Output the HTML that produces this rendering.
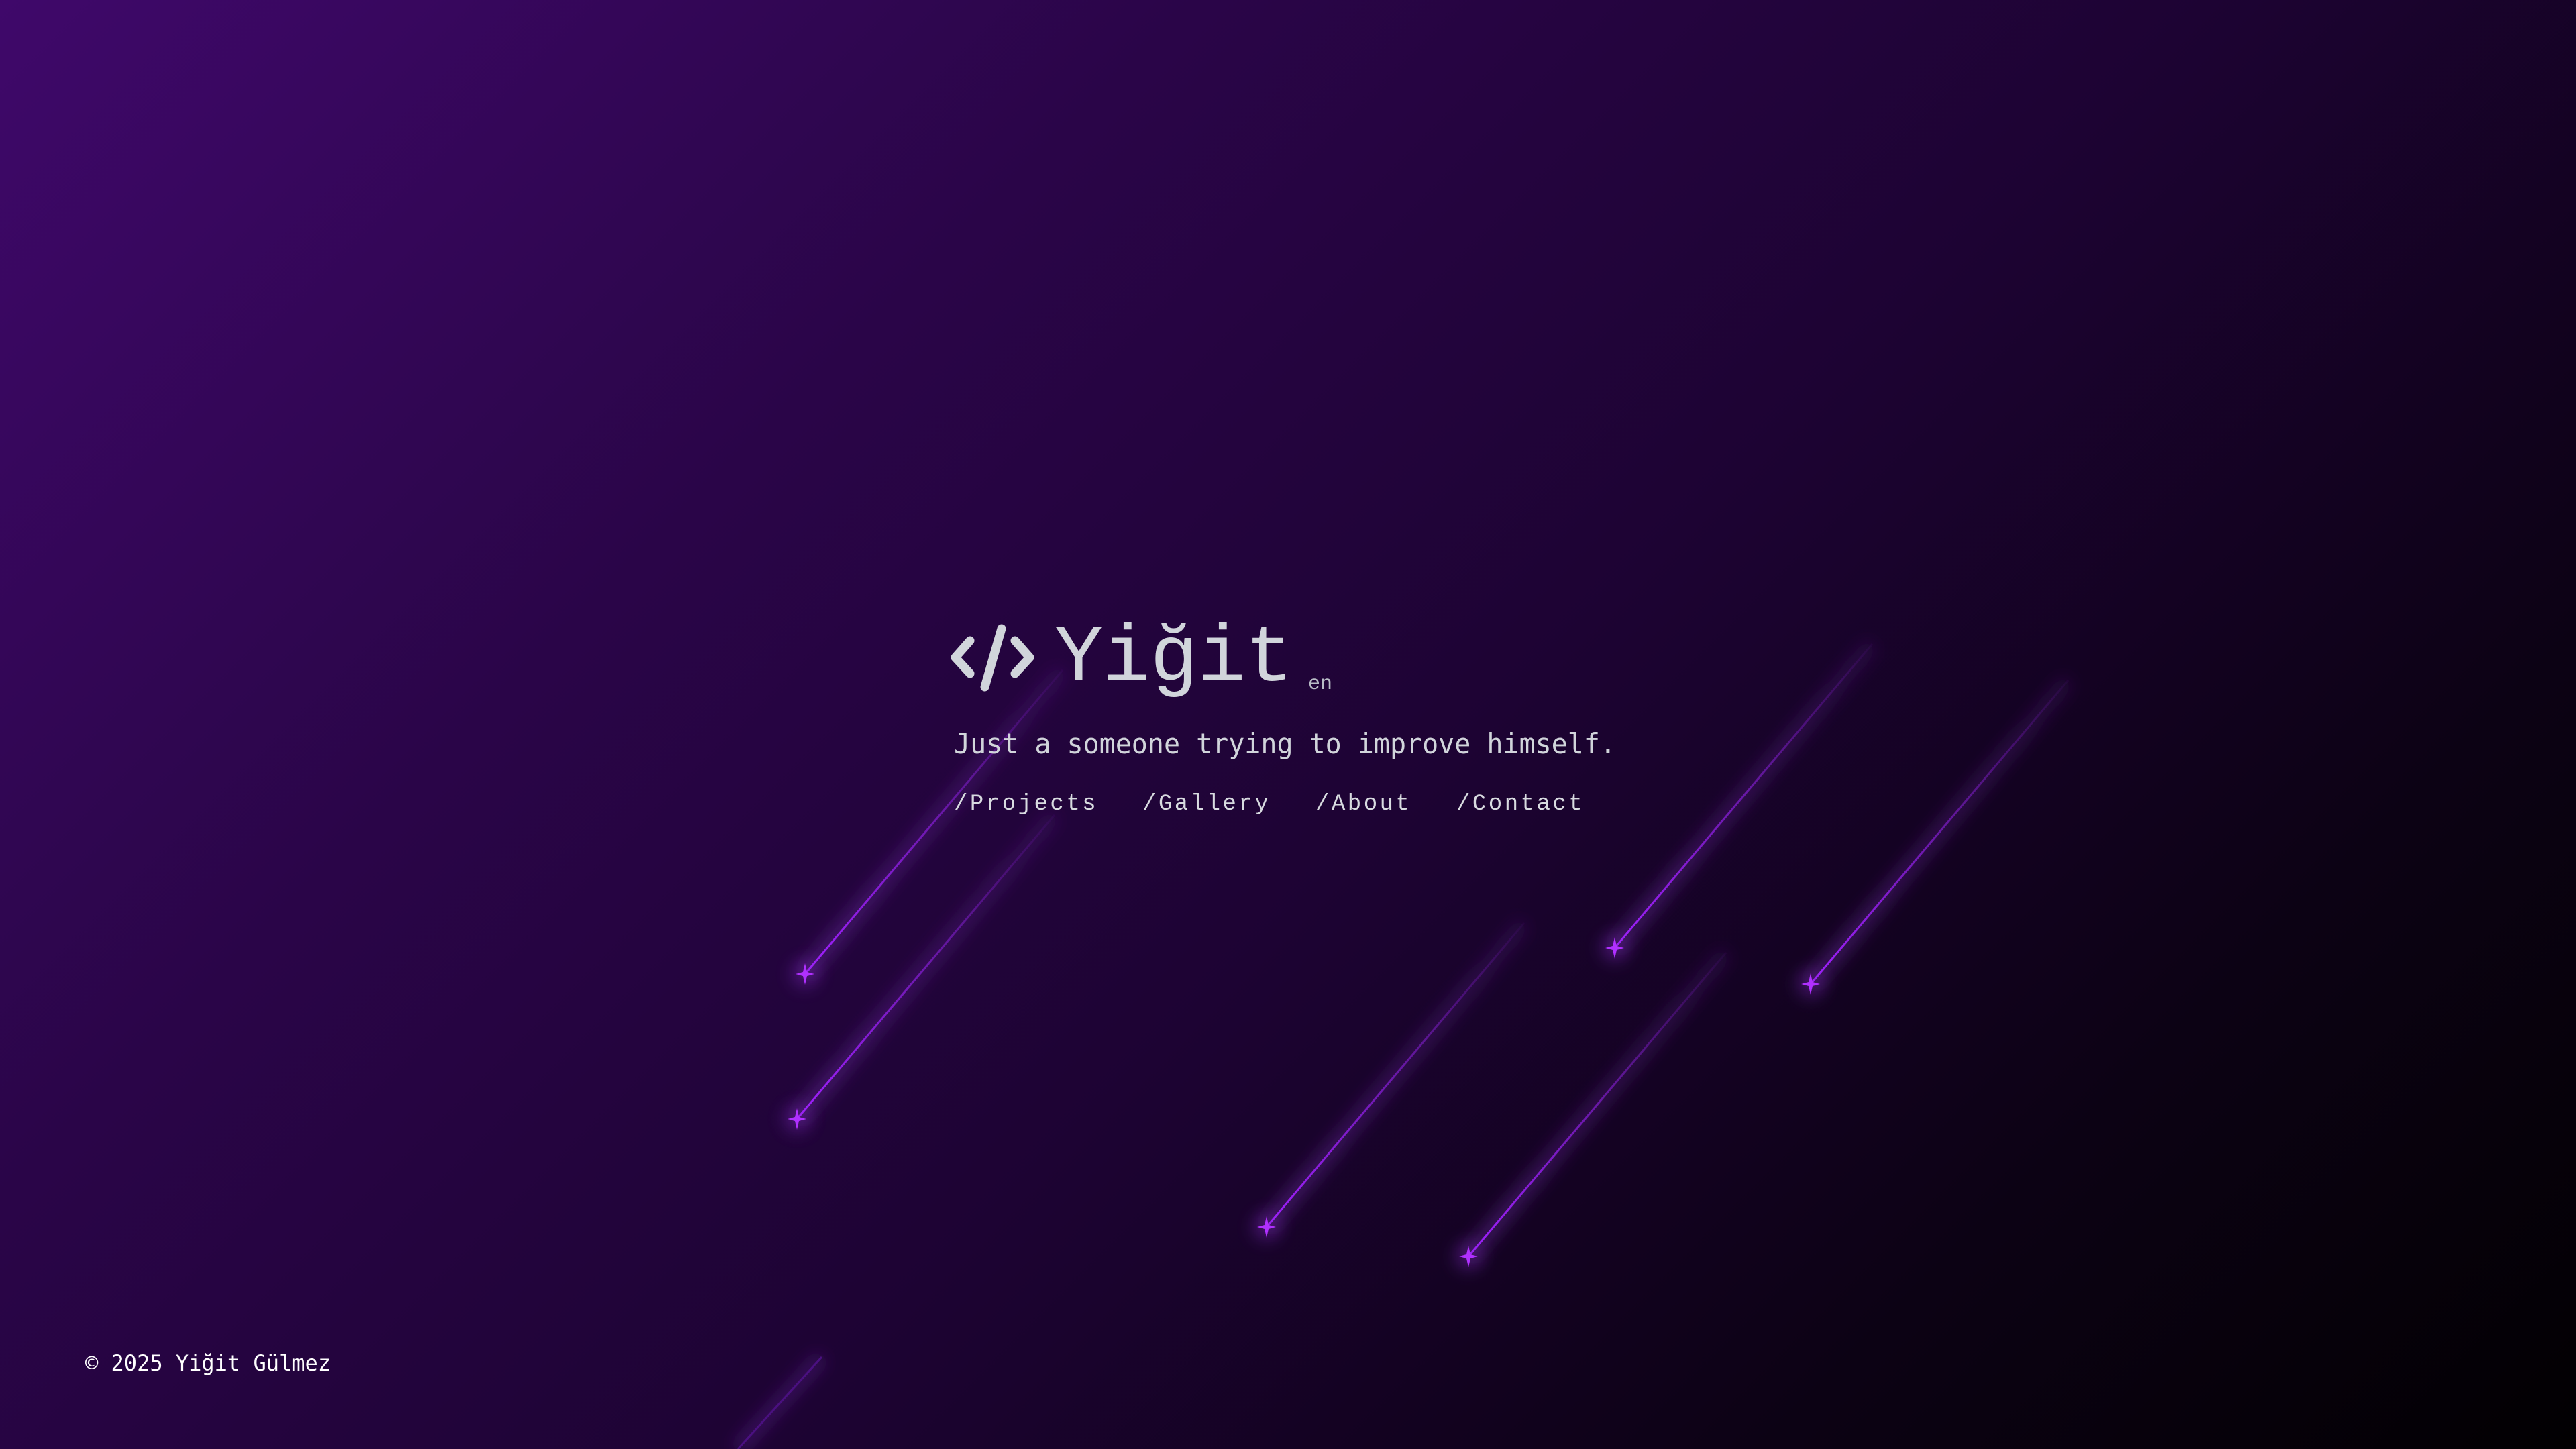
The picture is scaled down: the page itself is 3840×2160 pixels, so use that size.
<!DOCTYPE html>
<html><head><meta charset="utf-8">
<style>
html,body{margin:0;padding:0;width:3840px;height:2160px;overflow:hidden}
body{background:linear-gradient(135deg,#3f086a 0%,#2a0548 30%,#1d0333 55%,#0c0214 80%,#020002 100%);position:relative;font-family:"Liberation Mono","DejaVu Sans Mono",monospace;color:#d1d5db}
svg.bg{position:absolute;left:0;top:0;overflow:hidden}
.t{position:absolute;white-space:nowrap}
</style></head><body>
<svg class="bg" width="3840" height="2160" viewBox="0 0 3840 2160">
<defs>
<filter id="b" x="-50%" y="-50%" width="200%" height="200%"><feGaussianBlur stdDeviation="12"/></filter>
<linearGradient id="g" gradientUnits="userSpaceOnUse" x1="0" y1="0" x2="384" y2="-453"><stop offset="0" stop-color="#a020ff"/><stop offset="1" stop-color="#a020ff" stop-opacity="0.05"/></linearGradient>
<linearGradient id="g2" gradientUnits="userSpaceOnUse" x1="0" y1="0" x2="384" y2="-453"><stop offset="0" stop-color="#6a2aa0" stop-opacity="0.5"/><stop offset="1" stop-color="#6a2aa0" stop-opacity="0.2"/></linearGradient>
<g id="m">
<line x1="0" y1="0" x2="384" y2="-453" stroke="url(#g2)" stroke-width="24" filter="url(#b)"/>
<line x1="0" y1="0" x2="384" y2="-453" stroke="url(#g)" stroke-width="3"/>
<circle cx="0" cy="0" r="22" fill="#8a30d0" opacity="0.3" filter="url(#b)"/>
<path d="M0,-16 L3,-3 L14,0 L3,3 L0,16 L-3,3 L-14,0 L-3,-3Z" fill="#b030ff"/>
</g>
</defs>
<use href="#m" transform="translate(1200,1452)"/>
<use href="#m" transform="translate(1188,1668)"/>
<use href="#m" transform="translate(1888,1829)"/>
<use href="#m" transform="translate(2189,1873)"/>
<use href="#m" transform="translate(2407,1413)"/>
<use href="#m" transform="translate(2699,1467)"/>
<line x1="1100" y1="2160" x2="1225" y2="2023" stroke="#6a2aa0" stroke-opacity="0.4" stroke-width="20" filter="url(#b)"/>
<line x1="1100" y1="2160" x2="1225" y2="2023" stroke="#4a1080" stroke-width="3"/>
<g fill="none" stroke="#d1d5db" stroke-width="13" stroke-linecap="round" stroke-linejoin="round">
<path d="M1446,955 L1424,980 L1446,1004"/>
<path d="M1493,937 L1468,1024"/>
<path d="M1513,955 L1535,980 L1513,1004"/>
</g>
</svg>
<div class="t" style="left:1572px;top:913px;font-size:120px;line-height:140px;letter-spacing:-1px;font-family:'Liberation Mono',monospace">Yiğit</div>
<div class="t" style="left:1950px;top:1002px;font-size:30px;line-height:36px;color:#b8bcc6">en</div>
<div class="t" style="left:1422px;top:1084px;font-size:42px;line-height:50px;letter-spacing:0px;font-family:'DejaVu Sans Mono',monospace;transform:scaleX(0.952);transform-origin:left">Just a someone trying to improve himself.</div>
<div class="t" style="left:1422px;top:1177px;font-size:34px;line-height:44px;letter-spacing:3.5px;color:#d8dbe0">/Projects</div>
<div class="t" style="left:1703px;top:1177px;font-size:34px;line-height:44px;letter-spacing:3.5px;color:#d8dbe0">/Gallery</div>
<div class="t" style="left:1961px;top:1177px;font-size:34px;line-height:44px;letter-spacing:3.5px;color:#d8dbe0">/About</div>
<div class="t" style="left:2171px;top:1177px;font-size:34px;line-height:44px;letter-spacing:3.5px;color:#d8dbe0">/Contact</div>
<div class="t" style="left:127px;top:2012px;font-size:32px;line-height:40px;color:#ffffff;font-family:'DejaVu Sans Mono',monospace">© 2025 Yiğit Gülmez</div>
</body></html>
